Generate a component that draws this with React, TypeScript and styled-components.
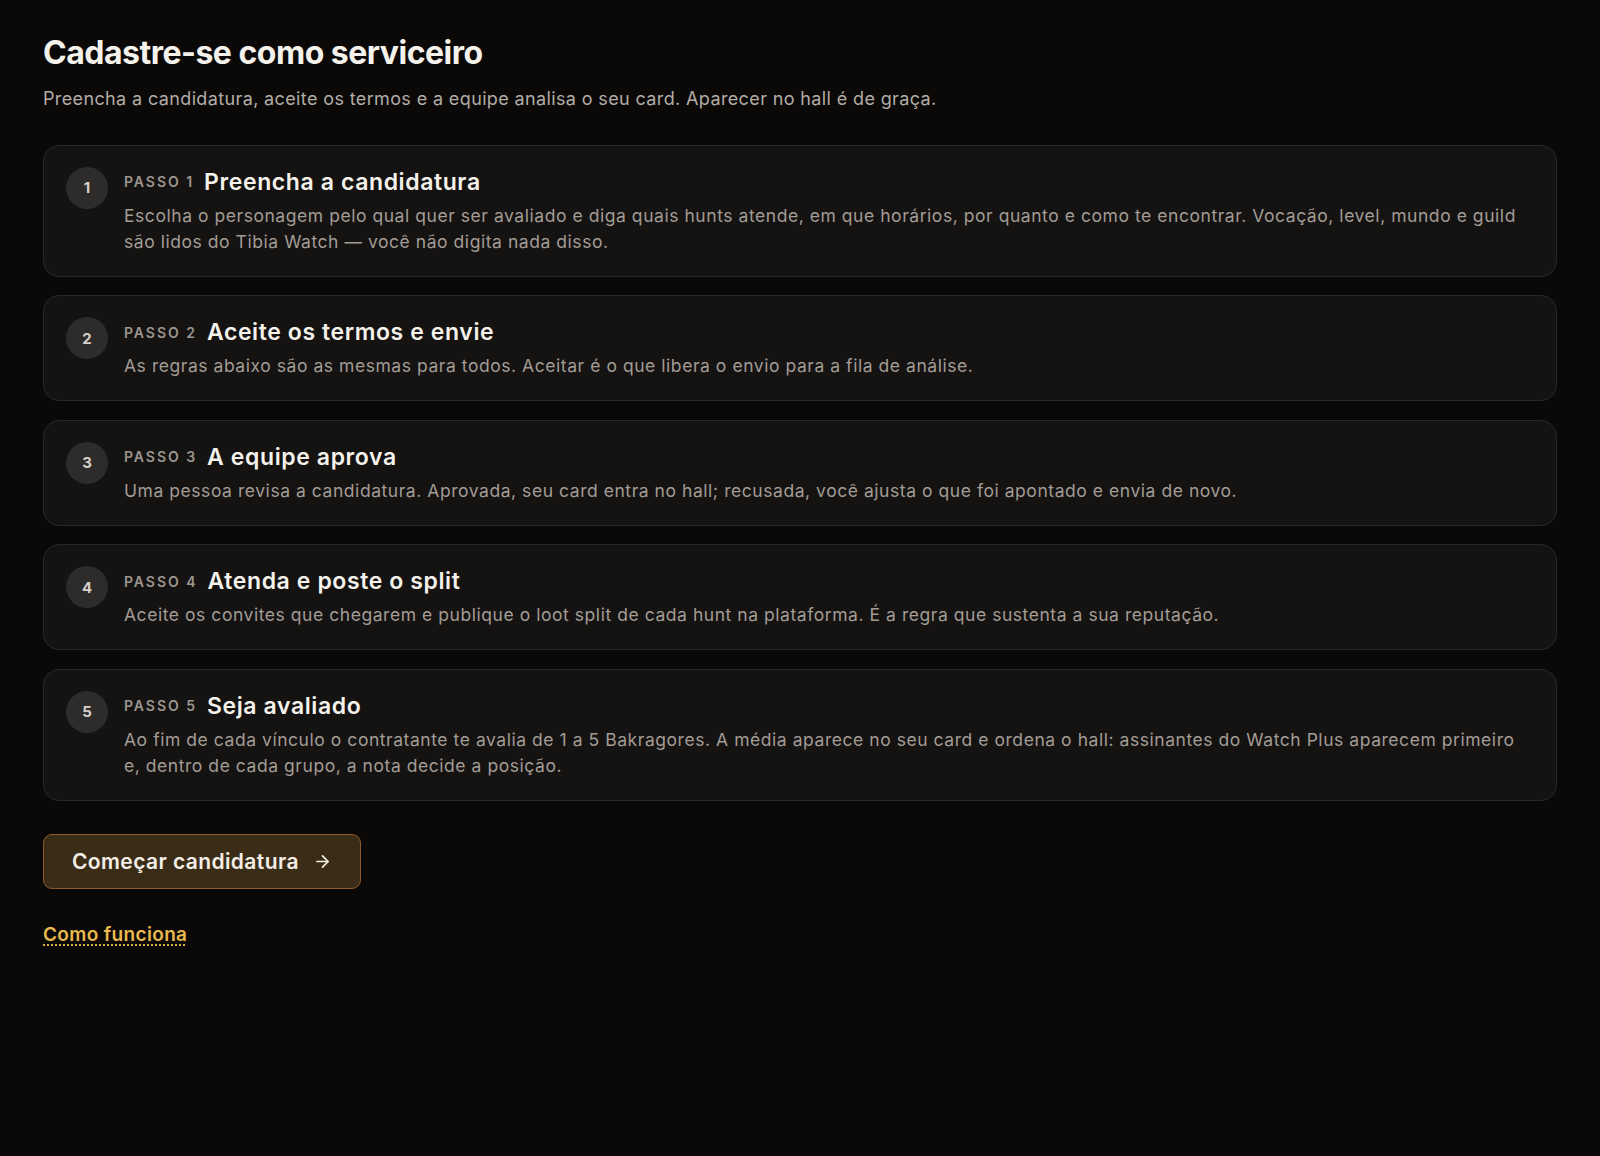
import styled, { createGlobalStyle } from "styled-components";
import { ArrowRight } from "lucide-react";

//styles
const GlobalStyle = createGlobalStyle`
  html, body {
    margin: 0;
    padding: 0;
    background: #0a0908;
  }
  body {
    font-family: Inter, "Noto Sans", "Liberation Sans", sans-serif;
    color: #f3efe9;
    -webkit-font-smoothing: antialiased;
  }
  * { box-sizing: border-box; }
`;

const Page = styled.main`
  min-height: 1156px;
  padding: 33px 43px 60px;
`;

const Title = styled.h1`
  margin: 0;
  font-size: 32px;
  line-height: 40px;
  font-weight: 700;
  letter-spacing: -0.5px;
  color: #f5f1eb;
`;

const Lead = styled.p`
  margin: 12px 0 0;
  font-size: 18px;
  line-height: 28px;
  letter-spacing: 0.37px;
  color: #b3aca5;
`;

const Steps = styled.ol`
  list-style: none;
  margin: 31.5px 0 0;
  padding: 0;
  display: flex;
  flex-direction: column;
  gap: 18.5px;
`;

const StepCard = styled.li`
  display: grid;
  grid-template-columns: 42px 1fr;
  column-gap: 16px;
  padding: 21px 30px 21px 22px;
  background: #141312;
  border: 1px solid #2a2826;
  border-radius: 16px;
`;

const Badge = styled.span`
  width: 42px;
  height: 42px;
  border-radius: 50%;
  background: #2e2c2a;
  color: #d6d0ca;
  font-size: 15px;
  font-weight: 700;
  display: flex;
  align-items: center;
  justify-content: center;
`;

const StepHead = styled.div`
  display: flex;
  align-items: center;
  gap: 10px;
`;

const StepLabel = styled.span`
  font-size: 14px;
  font-weight: 600;
  letter-spacing: 0.14em;
  text-transform: uppercase;
  color: #9d968f;
`;

const StepTitle = styled.h2`
  margin: 0;
  font-size: 23px;
  line-height: 30px;
  font-weight: 600;
  letter-spacing: 0.6px;
  color: #f5f1eb;
`;

const StepText = styled.p`
  margin: 6px 0 0;
  font-size: 17.5px;
  line-height: 26px;
  letter-spacing: 0.55px;
  color: #a39c95;
`;

const Actions = styled.div`
  margin-top: 33px;
  display: flex;
  flex-direction: column;
  align-items: flex-start;
  gap: 32px;
`;

const StartButton = styled.button`
  display: inline-flex;
  align-items: center;
  gap: 14px;
  height: 55px;
  padding: 0 28px;
  background: #3a2c16;
  border: 1px solid #8d5a2c;
  border-radius: 9px;
  color: #f4eee6;
  font-family: inherit;
  font-size: 21px;
  font-weight: 600;
  letter-spacing: 0.4px;
  cursor: pointer;
`;

const HowLink = styled.a`
  font-size: 19px;
  line-height: 28px;
  font-weight: 600;
  letter-spacing: 0.35px;
  color: #e9b94c;
  text-decoration: underline dotted;
  text-underline-offset: 4px;
  cursor: pointer;
`;

const steps = [
  {
    title: "Preencha a candidatura",
    text: "Escolha o personagem pelo qual quer ser avaliado e diga quais hunts atende, em que horários, por quanto e como te encontrar. Vocação, level, mundo e guild são lidos do Tibia Watch — você não digita nada disso.",
  },
  {
    title: "Aceite os termos e envie",
    text: "As regras abaixo são as mesmas para todos. Aceitar é o que libera o envio para a fila de análise.",
  },
  {
    title: "A equipe aprova",
    text: "Uma pessoa revisa a candidatura. Aprovada, seu card entra no hall; recusada, você ajusta o que foi apontado e envia de novo.",
  },
  {
    title: "Atenda e poste o split",
    text: "Aceite os convites que chegarem e publique o loot split de cada hunt na plataforma. É a regra que sustenta a sua reputação.",
  },
  {
    title: "Seja avaliado",
    text: "Ao fim de cada vínculo o contratante te avalia de 1 a 5 Bakragores. A média aparece no seu card e ordena o hall: assinantes do Watch Plus aparecem primeiro e, dentro de cada grupo, a nota decide a posição.",
  },
];

const App = () => {
  return (
    <>
      <GlobalStyle />
      <Page>
        <Title>Cadastre-se como serviceiro</Title>
        <Lead>
          Preencha a candidatura, aceite os termos e a equipe analisa o seu card. Aparecer no hall é de graça.
        </Lead>
        <Steps>
          {steps.map((step, i) => (
            <StepCard key={step.title}>
              <Badge>{i + 1}</Badge>
              <div>
                <StepHead>
                  <StepLabel>Passo {i + 1}</StepLabel>
                  <StepTitle>{step.title}</StepTitle>
                </StepHead>
                <StepText>{step.text}</StepText>
              </div>
            </StepCard>
          ))}
        </Steps>
        <Actions>
          <StartButton>
            Começar candidatura
            <ArrowRight size={19} strokeWidth={2.2} />
          </StartButton>
          <HowLink>Como funciona</HowLink>
        </Actions>
      </Page>
    </>
  );
};

export default App;
